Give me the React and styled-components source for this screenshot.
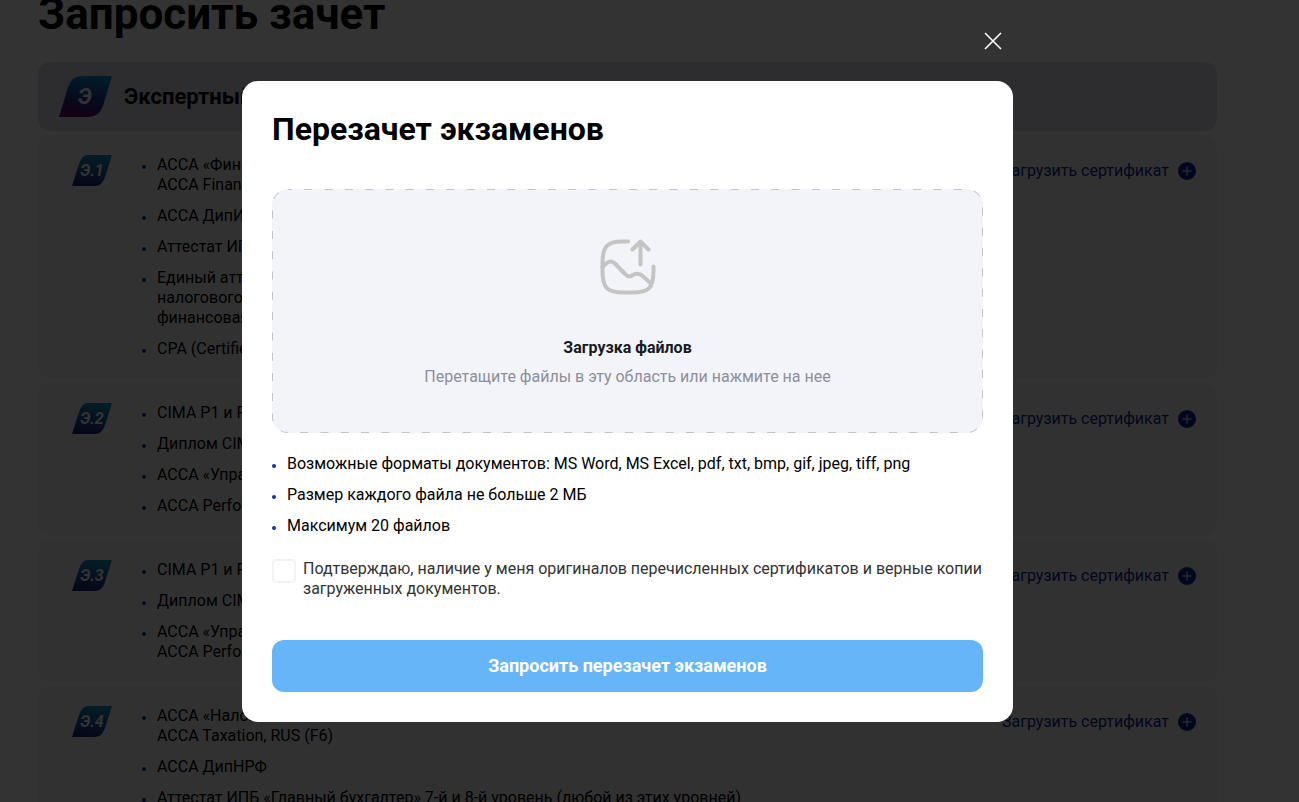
import React, { useState } from 'react';
import styled, { createGlobalStyle } from 'styled-components';

const levels = [
  {
    code: 'Э.1',
    items: [
      ['АССА «Финансовая отчетность»', 'ACCA Financial Reporting (F7)'],
      ['АССА ДипИФР'],
      ['Аттестат ИПБ'],
      ['Единый аттестат', 'налогового консультанта', 'финансовая отчетность'],
      ['CPA (Certified Public Accountant)'],
    ],
  },
  {
    code: 'Э.2',
    items: [['CIMA P1 и P2'], ['Диплом CIMA'], ['АССА «Управление»'], ['ACCA Performance']],
  },
  {
    code: 'Э.3',
    items: [['CIMA P1 и P2'], ['Диплом CIMA'], ['АССА «Управление»', 'ACCA Performance']],
  },
  {
    code: 'Э.4',
    items: [
      ['АССА «Налоги»', 'ACCA Taxation, RUS (F6)'],
      ['АССА ДипНРФ'],
      ['Аттестат ИПБ «Главный бухгалтер» 7-й и 8-й уровень (любой из этих уровней)'],
    ],
  },
];

const rules = [
  'Возможные форматы документов: MS Word, MS Excel, pdf, txt, bmp, gif, jpeg, tiff, png',
  'Размер каждого файла не больше 2 МБ',
  'Максимум 20 файлов',
];

const Badge = ({ text, large }) => (
  <BadgeSvg $large={large} viewBox={large ? '0 0 53 41' : '0 0 40 31'} aria-hidden="true">
    <defs>
      <linearGradient id={large ? 'levelLarge' : 'levelSmall'} x1="0.6" y1="0" x2="0.4" y2="1">
        <stop offset="0" stopColor={large ? '#0090d8' : '#1192bc'} />
        <stop offset="0.5" stopColor={large ? '#1f3f98' : '#1a5a98'} />
        <stop offset="1" stopColor={large ? '#5c0066' : '#221f80'} />
      </linearGradient>
    </defs>
    {large ? (
      <path d="M22 0H53L44 30Q40 41 30 41H0L9 11Q13 0 22 0Z" fill="url(#levelLarge)" />
    ) : (
      <path d="M16 0H40L33 22Q30 31 23 31H0L7 9Q10 0 16 0Z" fill="url(#levelSmall)" />
    )}
    <text x={large ? 26 : 20} y={large ? 28 : 21} textAnchor="middle">{text}</text>
  </BadgeSvg>
);

const App = () => {
  const [confirmed, setConfirmed] = useState(false);

  return (
    <>
      <GlobalStyle />
      <Page>
        <PageTitle>Запросить зачет</PageTitle>
        <GroupHeader>
          <Badge text="Э" large />
          <h2>Экспертный уровень</h2>
        </GroupHeader>
        {levels.map((level) => (
          <LevelCard key={level.code}>
            <Badge text={level.code} />
            <BulletList>
              {level.items.map((lines) => (
                <li key={lines[0]}>
                  <div>
                    {lines.map((line) => (
                      <p key={line}>{line}</p>
                    ))}
                  </div>
                </li>
              ))}
            </BulletList>
            <UploadButton type="button">
              Загрузить сертификат
              <svg viewBox="0 0 18 18" aria-hidden="true">
                <circle cx="9" cy="9" r="9" fill="#0c2396" />
                <path d="M9 4.5V13.5M4.5 9H13.5" stroke="#c4c8e0" strokeWidth="1.5" />
              </svg>
            </UploadButton>
          </LevelCard>
        ))}
      </Page>

      <Overlay>
        <Modal role="dialog" aria-modal="true" aria-labelledby="modal-title">
          <CloseButton type="button" aria-label="Закрыть">
            <svg viewBox="0 0 24 24" aria-hidden="true">
              <path d="M4 4L20 20M20 4L4 20" stroke="#fff" strokeWidth="1.6" />
            </svg>
          </CloseButton>
          <ModalTitle id="modal-title">Перезачет экзаменов</ModalTitle>

          <DropZone>
            <input type="file" multiple />
            <DashedBorder aria-hidden="true">
              <rect width="100%" height="100%" rx="16" />
            </DashedBorder>
            <UploadIcon viewBox="0 0 56 56" aria-hidden="true">
              <path d="M28 2.5H22C7 2.5 2.5 8 2.5 24V32C2.5 49 7 53.5 24 53.5H32C49 53.5 53.5 49 53.5 32V27.5" />
              <path d="M2.5 28L6 24.500Q10.500 20.500 15 24.500L25 35Q28.500 39 32 36.500Q37 33 42 36.500L51 44.500" />
              <path d="M40.500 25.500V2.500M32.500 10.500L40.500 2.500L48.500 10.500" />
            </UploadIcon>
            <DropTitle>Загрузка файлов</DropTitle>
            <DropHint>Перетащите файлы в эту область или нажмите на нее</DropHint>
          </DropZone>

          <BulletList>
            {rules.map((rule) => (
              <li key={rule}>{rule}</li>
            ))}
          </BulletList>

          <Confirm>
            <input
              type="checkbox"
              checked={confirmed}
              onChange={(e) => setConfirmed(e.target.checked)}
            />
            <span>
              Подтверждаю, наличие у меня оригиналов перечисленных сертификатов и верные копии
              загруженных документов.
            </span>
          </Confirm>

          <SubmitButton type="button">Запросить перезачет экзаменов</SubmitButton>
        </Modal>
      </Overlay>
    </>
  );
};

const GlobalStyle = createGlobalStyle`
  * {
    box-sizing: border-box;
  }

  html,
  body {
    margin: 0;
    overflow: hidden;
  }

  body {
    background: #fff;
    color: #000;
    font: 16px/20px Roboto, "Liberation Sans", sans-serif;
  }

  h1, h2, p, ul {
    margin: 0;
    padding: 0;
  }

  button, input {
    font: inherit;
  }
`;

const Page = styled.main`
  display: flex;
  flex-direction: column;
  gap: 4px;
  height: 100vh;
  padding: 0 82px 0 38px;
  overflow: hidden;

  > * {
    flex-shrink: 0;
  }
`;

const PageTitle = styled.h1`
  margin-bottom: 30px;
  font-size: 44px;
  line-height: 28px;
`;

const GroupHeader = styled.header`
  display: flex;
  align-items: center;
  gap: 12px;
  height: 69px;
  padding: 0 21px;
  border-radius: 12px;
  background: #e0e2f0;

  h2 {
    font-size: 22px;
    line-height: 28px;
  }
`;

const LevelCard = styled.section`
  display: flex;
  align-items: flex-start;
  padding: 20px 21px 20px 34px;
  border-radius: 12px;
  background: #f4f5fa;
`;

const BadgeSvg = styled.svg`
  flex-shrink: 0;
  width: ${({ $large }) => ($large ? 53 : 40)}px;
  height: ${({ $large }) => ($large ? 41 : 31)}px;

  text {
    fill: #fff;
    font-size: ${({ $large }) => ($large ? 22 : 16)}px;
    font-style: italic;
    font-weight: 700;
  }
`;

const BulletList = styled.ul`
  display: flex;
  flex: 1;
  flex-direction: column;
  gap: 11px;
  list-style: none;

  li {
    display: flex;
    gap: 11px;
  }

  li::before {
    content: '';
    flex-shrink: 0;
    width: 4px;
    height: 4px;
    margin-top: 10px;
    border-radius: 50%;
    background: #1430a8;
  }

  ${LevelCard} & {
    margin-left: 30px;
  }
`;

const UploadButton = styled.button`
  display: flex;
  align-items: center;
  gap: 9px;
  height: 31px;
  padding: 0;
  border: 0;
  background: none;
  color: #0c2396;
  cursor: pointer;

  svg {
    width: 18px;
    height: 18px;
  }
`;

const Overlay = styled.div`
  position: fixed;
  inset: 0;
  padding: 81px 82px 0 38px;
  overflow: hidden;
  background: rgba(0, 0, 0, 0.8);
`;

const Modal = styled.div`
  position: relative;
  display: flex;
  flex-direction: column;
  max-width: 771px;
  margin: 0 auto;
  padding: 30px;
  border-radius: 16px;
  background: #fff;
`;

const CloseButton = styled.button`
  position: absolute;
  top: -52px;
  right: 8px;
  width: 24px;
  height: 24px;
  padding: 0;
  border: 0;
  background: none;
  cursor: pointer;

  svg {
    display: block;
  }
`;

const ModalTitle = styled.h2`
  margin-bottom: 42px;
  font-size: 32px;
  line-height: 36px;
`;

const DropZone = styled.label`
  position: relative;
  display: flex;
  flex-direction: column;
  align-items: center;
  height: 244px;
  margin-bottom: 21px;
  padding-top: 50px;
  border-radius: 16px;
  background: #f3f4f9;
  overflow: hidden;
  cursor: pointer;

  input {
    position: absolute;
    inset: 0;
    opacity: 0;
  }
`;

const DashedBorder = styled.svg`
  position: absolute;
  inset: 0;
  width: 100%;
  height: 100%;

  rect {
    fill: none;
    stroke: #c4c4c4;
    stroke-width: 2;
    stroke-dasharray: 8 12.3;
    stroke-dashoffset: 4;
  }
`;

const UploadIcon = styled.svg`
  width: 56px;
  height: 56px;
  margin-bottom: 43px;
  fill: none;
  stroke: #c4c4c4;
  stroke-width: 4;
  stroke-linecap: round;
  stroke-linejoin: round;
`;

const DropTitle = styled.strong`
  margin-bottom: 9px;
  color: #1a1a1e;
`;

const DropHint = styled.span`
  color: #8d8f9b;
`;

const Confirm = styled.label`
  display: flex;
  align-items: flex-start;
  gap: 7px;
  margin: 23px 0 41px;
  color: #333;
  cursor: pointer;

  input {
    appearance: none;
    flex-shrink: 0;
    width: 24px;
    height: 24px;
    margin: 0;
    border: 2px solid #f2f3f9;
    border-radius: 4px;
    background: #fff;
  }

  input:checked {
    background: #67b5f9;
  }
`;

const SubmitButton = styled.button`
  height: 52px;
  border: 0;
  border-radius: 12px;
  background: #67b5f9;
  color: #fff;
  font-size: 18px;
  font-weight: 700;
  cursor: pointer;
`;

export default App;
